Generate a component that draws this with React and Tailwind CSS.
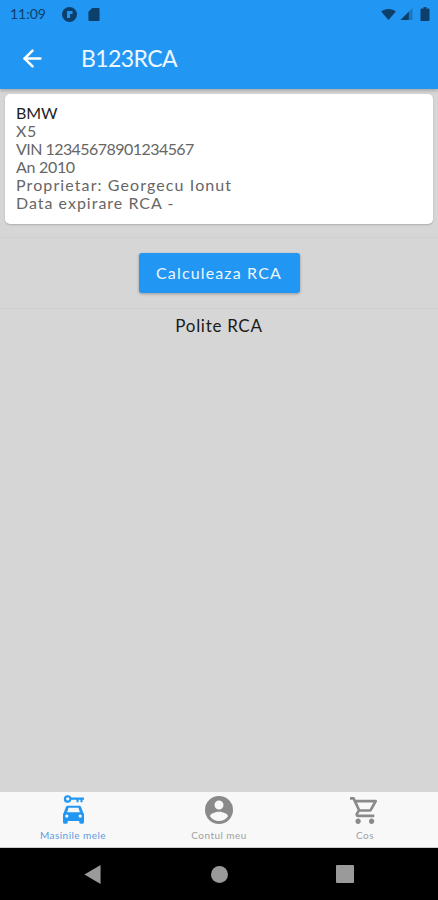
import React from 'react';
import { ArrowLeft } from 'lucide-react';

function StatusBar() {
  return (
    <div className="flex h-7 items-center justify-between pl-[10px] pr-[8px] text-[#0d3f6b]">
      <div className="flex items-center">
        <span className="w-[38px] text-[14px] leading-none">11:09</span>
        <svg width="15" height="15" viewBox="0 0 15 15" className="ml-[14px]">
          <circle cx="7.5" cy="7.5" r="7.5" fill="#0d3f6b" />
          <path d="M5 11V4h5.500v3H8v4z" fill="#2196f3" />
        </svg>
        <svg width="12" height="13" viewBox="0 0 12 14" className="ml-[11px]">
          <path d="M4 0h7a1 1 0 0 1 1 1v12a1 1 0 0 1-1 1H1a1 1 0 0 1-1-1V4z" fill="#0d3f6b" />
        </svg>
      </div>
      <div className="flex items-center">
        <svg width="15" height="11" viewBox="0 0 16 12">
          <path d="M0 2.800C2 1 5 0 8 0s6 1 8 2.800L8 12z" fill="#0d3f6b" />
        </svg>
        <svg width="13" height="12" viewBox="0 0 13 13" className="ml-[4px]">
          <path d="M13 0v13H0z" fill="#0d3f6b" opacity="0.35" />
          <path d="M9 4v9H0z" fill="#0d3f6b" />
        </svg>
        <svg width="10" height="14" viewBox="0 0 9 14" className="ml-[7px]">
          <path d="M3 0h3v1.500h2a1 1 0 0 1 1 1V13a1 1 0 0 1-1 1H1a1 1 0 0 1-1-1V2.500a1 1 0 0 1 1-1h2z" fill="#0d3f6b" />
        </svg>
      </div>
    </div>
  );
}

function CarKeyIcon() {
  return (
    <svg width="21" height="29" viewBox="0 0 22 30" fill="#2196f3">
      <path fillRule="evenodd" d="M5 0a4 4 0 0 1 3.800 2.500H22v2.400h-1.500V7.500h-2.200V4.900h-2v2.600h-2.200V4.900H8.800A4 4 0 1 1 5 0zm0 2.200a1.700 1.700 0 1 0 0 3.500 1.700 1.700 0 0 0 0-3.500z" />
      <path fillRule="evenodd" d="M5 11h12c1 0 1.700.6 2 1.400l2.200 6.100c.5.5.8 1.200.8 2V28a2 2 0 0 1-2 2h-1a2 2 0 0 1-2-2v-1H5v1a2 2 0 0 1-2 2H2a2 2 0 0 1-2-2v-7.500c0-.8.300-1.500.8-2L3 12.400c.3-.8 1-1.400 2-1.400zm.8 2.200L4.300 18h13.400l-1.500-4.800zM4 20.200a1.700 1.700 0 1 0 0 3.400 1.700 1.700 0 0 0 0-3.400zm14 0a1.700 1.700 0 1 0 0 3.400 1.700 1.700 0 0 0 0-3.400z" />
    </svg>
  );
}

function UserIcon() {
  return (
    <svg width="28" height="28" viewBox="0 0 28 28" fill="#8a8a8a">
      <path fillRule="evenodd" d="M14 0a14 14 0 1 1 0 28 14 14 0 0 1 0-28zm0 4.500a4.500 4.500 0 1 0 0 9 4.500 4.500 0 0 0 0-9zM14 25c3.700 0 7-1.900 9-4.800-.1-2.900-6-4.500-9-4.500s-8.900 1.600-9 4.500c2 2.900 5.300 4.800 9 4.800z" />
    </svg>
  );
}

function CartIcon() {
  return (
    <svg width="27" height="27" viewBox="1 2 20 20" fill="#8a8a8a" className="mr-[3px]">
      <path d="M15.550 13c.750 0 1.410-.410 1.750-1.030l3.580-6.490A.996.996 0 0 0 20.010 4H5.210l-.940-2H1v2h2l3.600 7.590-1.350 2.440C4.520 15.370 5.480 17 7 17h12v-2H7l1.100-2h7.450zM6.160 6h12.150l-2.760 5H8.530L6.160 6zM7 18c-1.100 0-1.990.900-1.990 2S5.900 22 7 22s2-.900 2-2-.900-2-2-2zm10 0c-1.100 0-1.990.900-1.990 2s.890 2 1.990 2 2-.900 2-2-.900-2-2-2z" />
    </svg>
  );
}

function BottomTabs() {
  const tabs = [
    { name: 'Masinile mele', icon: <CarKeyIcon />, color: 'text-[#5a9be0]' },
    { name: 'Contul meu', icon: <UserIcon />, color: 'text-[#a0a0a0]' },
    { name: 'Cos', icon: <CartIcon />, color: 'text-[#a0a0a0]' },
  ];

  return (
    <div className="grid h-[55px] grid-cols-3 bg-[#f8f8f8]">
      {tabs.map((tab) => (
        <div key={tab.name} className="flex flex-col items-center">
          <div className="flex h-[32px] items-end">{tab.icon}</div>
          <span className={`mt-[4px] text-[10px] leading-[14px] tracking-[0.45px] ${tab.color}`}>{tab.name}</span>
        </div>
      ))}
    </div>
  );
}

function NavBar() {
  return (
    <div className="flex h-[52px] items-center justify-between bg-black pl-[84px] pr-[84px]">
      <svg width="17" height="19" viewBox="0 0 17 20">
        <path d="M17 0v20L0 10z" fill="#9a9a9a" />
      </svg>
      <div className="ml-[1px] h-[17px] w-[17px] rounded-full bg-[#9a9a9a]" />
      <div className="h-[18px] w-[18px] rounded-[1px] bg-[#9a9a9a]" />
    </div>
  );
}

export default function App() {
  const lines = [
    { text: 'X5', className: 'tracking-[0.55px]' },
    { text: 'VIN 12345678901234567', className: 'tracking-[-0.55px]' },
    { text: 'An 2010', className: 'tracking-[-0.3px]' },
    { text: 'Proprietar: Georgecu Ionut', className: 'tracking-[1.1px]' },
    { text: 'Data expirare RCA -', className: 'tracking-[1px]' },
  ];

  return (
    <div className="flex h-[900px] flex-col bg-[#d6d6d6] font-['Lato',sans-serif]">
      <header className="h-[89px] bg-[#2196f3] shadow-[0_2px_3px_rgba(0,0,0,0.2)]">
        <StatusBar />
        <div className="flex h-[61px] items-center pl-[19px]">
          <ArrowLeft size={27} strokeWidth={2.2} className="text-white" />
          <h1 className="ml-[35px] text-[23px] tracking-[-0.6px] text-[#eef7ff]">B123RCA</h1>
        </div>
      </header>

      <main className="flex-1">
        <div className="mx-[5px] mt-[5px] h-[130px] rounded-[5px] bg-white px-[11px] pt-[10px] text-[16px] leading-[18px] text-[#666666] shadow-[0_1px_2px_rgba(0,0,0,0.2)]">
          <p className="tracking-[-0.1px] text-[#1f1f1f]">BMW</p>
          {lines.map((line) => (
            <p key={line.text} className={line.className}>{line.text}</p>
          ))}
        </div>

        <div className="mt-[13px] flex h-[72px] items-center justify-center border-y border-[#cfcfcf]">
          <button className="h-[40px] w-[161px] rounded-[3px] bg-[#2196f3] text-[16px] tracking-[1.15px] text-[#eef7ff] shadow-[0_1px_3px_rgba(0,0,0,0.3)]">
            Calculeaza RCA
          </button>
        </div>

        <p className="mt-[6px] text-center text-[17px] leading-[22px] tracking-[0.7px] text-[#1a1a1a]">Polite RCA</p>
      </main>

      <BottomTabs />
      <div className="h-px bg-[#cccccc]" />
      <NavBar />
    </div>
  );
}
